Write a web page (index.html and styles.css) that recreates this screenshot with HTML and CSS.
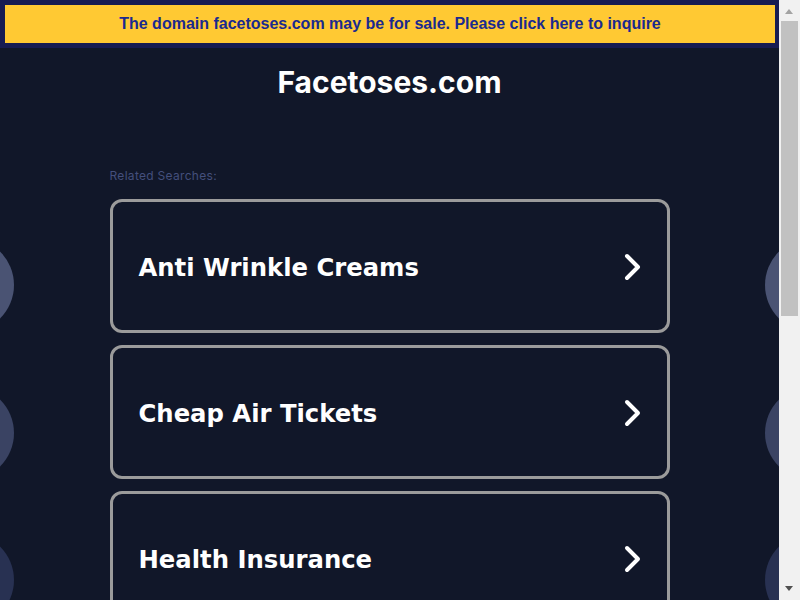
FILE: index.html
```html
<!DOCTYPE html>
<html>
<head>
<meta charset="utf-8">
<link rel="stylesheet" href="styles.css">
</head>
<body>
<div class="page">
  <div class="banner-wrap">
    <a class="banner" href="#">The domain facetoses.com may be for sale. Please click here to inquire</a>
  </div>
  <div class="deco">
    <span class="dot dot-l dot-1"></span>
    <span class="dot dot-l dot-2"></span>
    <span class="dot dot-l dot-3"></span>
    <span class="dot dot-r dot-1"></span>
    <span class="dot dot-r dot-2"></span>
    <span class="dot dot-r dot-3"></span>
  </div>
  <main class="main">
    <h1 class="title">Facetoses.com</h1>
    <p class="related">Related Searches:</p>
    <div class="list">
      <a class="card" href="#"><span class="card-text">Anti Wrinkle Creams</span><svg class="chev" width="18" height="28" viewBox="0 0 18 28"><path d="M3 3 L14 14 L3 25" fill="none" stroke="#fff" stroke-width="4" stroke-linecap="round" stroke-linejoin="round"/></svg></a>
      <a class="card" href="#"><span class="card-text">Cheap Air Tickets</span><svg class="chev" width="18" height="28" viewBox="0 0 18 28"><path d="M3 3 L14 14 L3 25" fill="none" stroke="#fff" stroke-width="4" stroke-linecap="round" stroke-linejoin="round"/></svg></a>
      <a class="card" href="#"><span class="card-text">Health Insurance</span><svg class="chev" width="18" height="28" viewBox="0 0 18 28"><path d="M3 3 L14 14 L3 25" fill="none" stroke="#fff" stroke-width="4" stroke-linecap="round" stroke-linejoin="round"/></svg></a>
      <a class="card" href="#"><span class="card-text">Online Degrees</span><svg class="chev" width="18" height="28" viewBox="0 0 18 28"><path d="M3 3 L14 14 L3 25" fill="none" stroke="#fff" stroke-width="4" stroke-linecap="round" stroke-linejoin="round"/></svg></a>
      <a class="card" href="#"><span class="card-text">Car Insurance</span><svg class="chev" width="18" height="28" viewBox="0 0 18 28"><path d="M3 3 L14 14 L3 25" fill="none" stroke="#fff" stroke-width="4" stroke-linecap="round" stroke-linejoin="round"/></svg></a>
    </div>
  </main>
</div>
<div class="scrollbar">
  <span class="sb-up"></span>
  <span class="sb-thumb"></span>
  <span class="sb-down"></span>
</div>
</body>
</html>
```
FILE: styles.css
```css
html, body {
  margin: 0;
  padding: 0;
}
body {
  background: #111729;
  font-family: "DejaVu Sans", sans-serif;
}
.page {
  position: relative;
  width: 779px;
  min-height: 1150px;
  overflow: hidden;
}
.banner-wrap {
  background: #171c52;
  padding: 5px 4px 5px 5px;
}
.banner {
  display: block;
  background: #ffc933;
  color: #1a2a8f;
  font-family: "Liberation Sans", Arial, sans-serif;
  font-weight: bold;
  font-size: 16px;
  line-height: 38px;
  text-align: center;
  text-decoration: none;
}
.deco {
  position: absolute;
  inset: 0;
  pointer-events: none;
}
.dot {
  position: absolute;
  width: 94px;
  height: 94px;
  border-radius: 50%;
}
.dot-l { left: -80px; }
.dot-r { right: -80px; }
.dot-1 { top: 238px; background: #4a5373; }
.dot-2 { top: 386px; background: #3a4363; }
.dot-3 { top: 533px; background: #283152; }
.main {
  position: relative;
  width: 560px;
  margin: 0 auto;
  padding-top: 14px;
}
.title {
  margin: 0;
  text-align: center;
  color: #ffffff;
  font-family: "Inter", "Open Sans", sans-serif;
  font-weight: 700;
  font-size: 30px;
  line-height: 40px;
}
.related {
  margin: 66px 0 0 0;
  font-family: "Inter", "Open Sans", sans-serif;
  font-size: 12px;
  letter-spacing: 0.3px;
  color: #444f7c;
  line-height: 16px;
}
.list {
  margin-top: 15px;
  display: flex;
  flex-direction: column;
  gap: 12px;
}
.card {
  box-sizing: border-box;
  height: 134px;
  border: 3px solid #9b9b9b;
  border-radius: 12px;
  display: flex;
  align-items: center;
  justify-content: space-between;
  padding: 2px 25px 0 26px;
  text-decoration: none;
  color: #fff;
}
.card-text {
  font-family: "DejaVu Sans", sans-serif;
  font-weight: bold;
  font-size: 24.3px;
}
.chev {
  display: block;
}
.scrollbar {
  position: fixed;
  top: 0;
  right: 0;
  width: 21px;
  height: 100vh;
  background: #f1f1f1;
}
.sb-up, .sb-down {
  position: absolute;
  left: 6px;
  width: 0;
  height: 0;
  border-left: 4.5px solid transparent;
  border-right: 4.5px solid transparent;
}
.sb-up {
  top: 9px;
  border-bottom: 5px solid #a3a3a3;
}
.sb-down {
  bottom: 9px;
  border-top: 5px solid #505050;
}
.sb-thumb {
  position: absolute;
  top: 21px;
  left: 2px;
  width: 17px;
  height: 295px;
  background: #c1c1c1;
}
```
